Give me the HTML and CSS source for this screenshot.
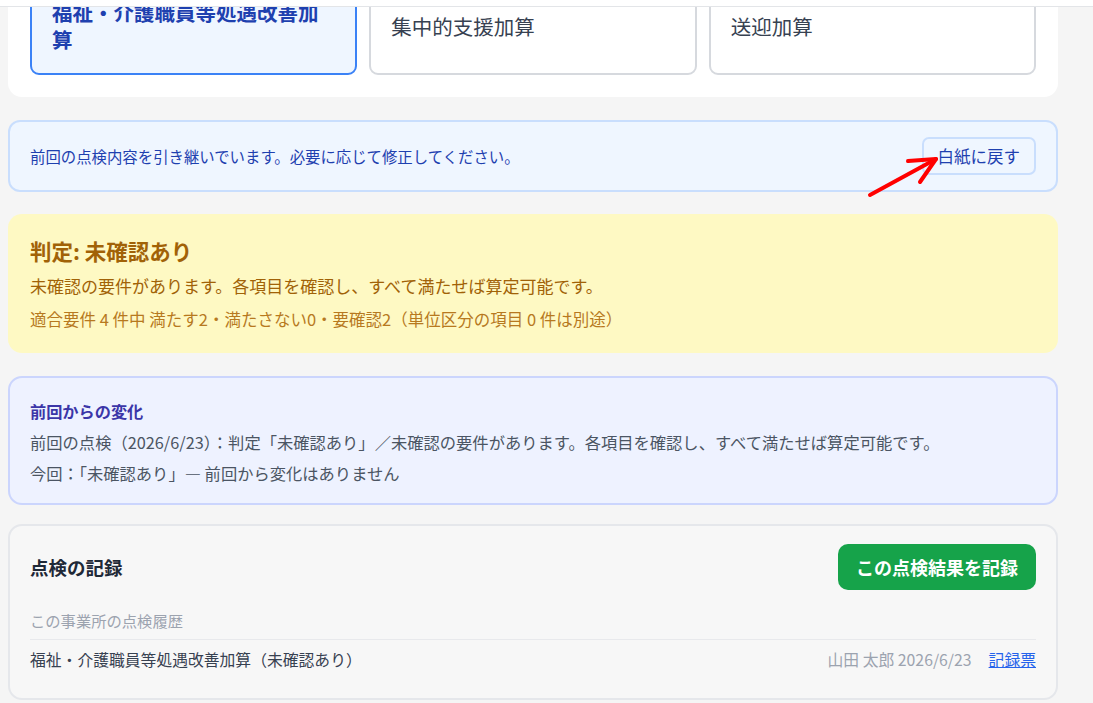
FILE: index.html
```html
<!DOCTYPE html>
<html lang="ja">
<head>
    <meta charset="UTF-8">
    <meta name="viewport" content="width=device-width, initial-scale=1.0">
    <title>加算チェック</title>
    <link rel="stylesheet" href="styles.css">
</head>
<body>
    <div class="topbar"></div>

    <main class="page">
        <section class="card">
            <div class="addon-grid">
                <button class="addon-btn active">福祉・介護職員等処遇改善加<br>算</button>
                <button class="addon-btn">集中的支援加算</button>
                <button class="addon-btn">送迎加算</button>
            </div>
        </section>

        <section class="notice">
            <p class="notice-text">前回の点検内容を引き継いでいます。必要に応じて修正してください。</p>
            <button class="reset-btn">白紙に戻す</button>
        </section>

        <section class="verdict">
            <h2 class="verdict-title">判定: 未確認あり</h2>
            <p class="verdict-text">未確認の要件があります。各項目を確認し、すべて満たせば算定可能です。</p>
            <p class="verdict-sub">適合要件 4 件中 満たす2・満たさない0・要確認2（単位区分の項目 0 件は別途）</p>
        </section>

        <section class="diff">
            <h3 class="diff-title">前回からの変化</h3>
            <p class="diff-line">前回の点検（2026/6/23）：判定「未確認あり」／未確認の要件があります。各項目を確認し、すべて満たせば算定可能です。</p>
            <p class="diff-line">今回：「未確認あり」— 前回から変化はありません</p>
        </section>

        <section class="record">
            <div class="record-head">
                <h3 class="record-title">点検の記録</h3>
                <button class="save-btn">この点検結果を記録</button>
            </div>
            <p class="record-sub">この事業所の点検履歴</p>
            <div class="record-row">
                <span class="record-name">福祉・介護職員等処遇改善加算（未確認あり）</span>
                <span class="record-meta">山田 太郎 2026/6/23<a href="#" class="record-link">記録票</a></span>
            </div>
        </section>
    </main>

    <!-- 注釈の矢印 -->
    <svg class="annotation" width="1093" height="703" viewBox="0 0 1093 703">
        <g stroke="#ff0000" stroke-width="4" fill="none" stroke-linecap="round" stroke-linejoin="round">
            <line x1="870" y1="195" x2="936" y2="159"/>
            <polyline points="908,161 936,159 920,182"/>
        </g>
    </svg>
</body>
</html>
```

FILE: styles.css
```css
html, body {
    margin: 0;
    padding: 0;
    height: 100%;
    overflow: hidden;
    background-color: #f5f5f5;
    font-family: "Noto Sans CJK JP", "Noto Sans", sans-serif;
    color: #374151;
}

body {
    position: relative;
}

p, h2, h3 {
    margin: 0;
}

button {
    font-family: inherit;
    cursor: pointer;
}

.topbar {
    position: fixed;
    top: 0;
    left: 0;
    right: 0;
    height: 6px;
    background-color: white;
    border-bottom: 1px solid #e3e5e8;
    z-index: 10;
}

.page {
    display: flex;
    flex-direction: column;
    gap: 22px;
    margin-top: -41px;
    padding: 0 35px 20px 8px;
}

/* 加算の選択 */
.card {
    background-color: white;
    border-radius: 14px;
    padding: 22px;
}

.addon-grid {
    display: grid;
    grid-template-columns: repeat(3, 1fr);
    gap: 12px;
}

.addon-btn {
    border: 2px solid #d6d9de;
    border-radius: 9px;
    background-color: white;
    padding: 16px 20px 20px;
    font-size: 20.5px;
    line-height: 27px;
    color: #374151;
    text-align: left;
}

.addon-btn.active {
    border-color: #3b82f6;
    background-color: #eff6ff;
    color: #1e40af;
    font-weight: 700;
}

/* 引き継ぎのお知らせ */
.notice {
    margin-top: 1px;
    display: flex;
    justify-content: space-between;
    align-items: center;
    padding: 15px 20px;
    border: 2px solid #c9defd;
    border-radius: 12px;
    background-color: #eff6ff;
}

.notice-text {
    font-size: 15.4px;
    color: #1e40af;
}

.reset-btn {
    height: 38px;
    padding: 0 14px;
    border: 2px solid #c9defd;
    border-radius: 7px;
    background-color: #eff6ff;
    color: #1e40af;
    font-size: 16.5px;
}

/* 判定 */
.verdict {
    padding: 23px 22px 24px;
    border-radius: 14px;
    background-color: #fef9c3;
}

.verdict-title {
    font-size: 21.5px;
    line-height: 28px;
    font-weight: 700;
    color: #a16207;
}

.verdict-text {
    margin-top: 9px;
    font-size: 17px;
    line-height: 24px;
    color: #a16207;
}

.verdict-sub {
    margin-top: 11px;
    font-size: 16.5px;
    line-height: 20px;
    color: #b7791f;
}

/* 前回からの変化 */
.diff {
    margin-top: 1px;
    padding: 22px 20px 19px;
    border: 2px solid #cbd5fd;
    border-radius: 14px;
    background-color: #eef2ff;
}

.diff-title {
    font-size: 16.2px;
    line-height: 22px;
    font-weight: 600;
    color: #3b36a8;
}

.diff-line {
    margin-top: 9px;
    font-size: 16.3px;
    line-height: 22px;
    color: #4b5563;
}

/* 点検の記録 */
.record {
    margin-top: -3px;
    padding: 18px 20px 18px;
    border: 2px solid #e5e7eb;
    border-radius: 14px;
    background-color: #f7f7f7;
}

.record-head {
    display: flex;
    justify-content: space-between;
    align-items: center;
}

.record-title {
    font-size: 18.5px;
    font-weight: 700;
    color: #1f2937;
}

.save-btn {
    height: 46px;
    padding: 0 18px;
    border: none;
    border-radius: 10px;
    background-color: #16a34a;
    color: white;
    font-size: 18px;
    font-weight: 700;
}

.record-sub {
    margin-top: 20px;
    padding-bottom: 9px;
    border-bottom: 1px solid #e8e9ec;
    font-size: 15.3px;
    line-height: 20px;
    color: #9ca3af;
}

.record-row {
    display: flex;
    justify-content: space-between;
    align-items: center;
    padding: 9px 0;
    font-size: 15.8px;
    line-height: 22px;
}

.record-name {
    color: #374151;
}

.record-meta {
    color: #9ca3af;
}

.record-link {
    margin-left: 17px;
    color: #2563eb;
    text-decoration: underline;
}

.annotation {
    position: absolute;
    top: 0;
    left: 0;
    pointer-events: none;
    z-index: 20;
}
```
